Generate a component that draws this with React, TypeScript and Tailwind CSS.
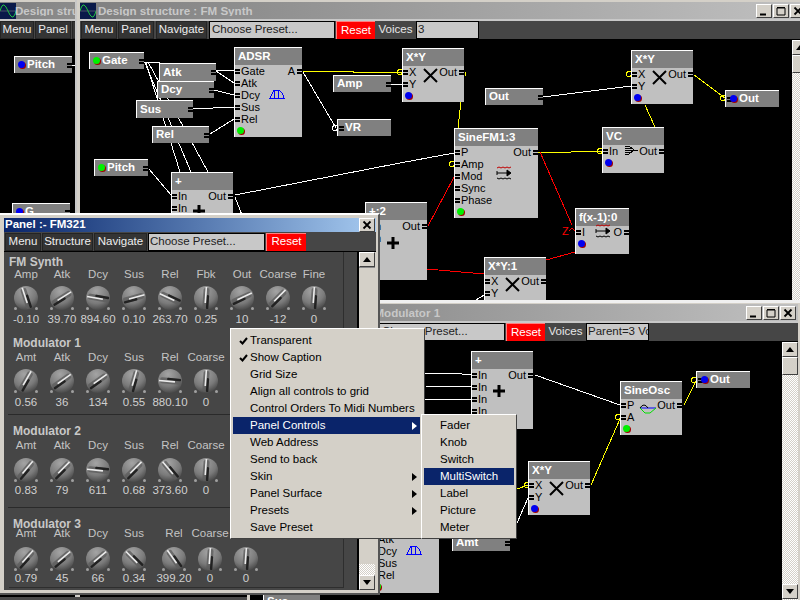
import React from "react";

type N = {
  x: number; y: number; w: number; h: number; t: string;
  kind?: "src" | "dst" | "box";
  dot?: "g" | "b"; ins?: string[]; outs?: string[]; icon?: string; small?: boolean;
};
type W = { p: number[]; c?: string };

const UI = "font-['Liberation_Sans',Arial,sans-serif]";
const BOLD = "font-['Liberation_Sans',Arial,sans-serif] font-bold";

const mainNodes: N[] = [
  { x: 89, y: 52, w: 55, h: 17, t: "Gate", kind: "src", dot: "g" },
  { x: 159, y: 63, w: 57, h: 18, t: "Atk", kind: "src" },
  { x: 157, y: 81, w: 57, h: 17, t: "Dcy", kind: "src" },
  { x: 136, y: 100, w: 57, h: 18, t: "Sus", kind: "src" },
  { x: 152, y: 126, w: 57, h: 17, t: "Rel", kind: "src" },
  { x: 94, y: 159, w: 54, h: 17, t: "Pitch", kind: "src", dot: "g" },
  { x: 333, y: 75, w: 58, h: 17, t: "Amp", kind: "src" },
  { x: 337, y: 119, w: 54, h: 17, t: "VR", kind: "dst" },
  { x: 485, y: 88, w: 58, h: 17, t: "Out", kind: "src" },
  { x: 725, y: 90, w: 54, h: 17, t: "Out", kind: "dst", dot: "b" },
  { x: 234, y: 47, w: 68, h: 90, t: "ADSR", ins: ["Gate", "Atk", "Dcy", "Sus", "Rel"], outs: ["A"], dot: "g", icon: "adsr" },
  { x: 171, y: 172, w: 62, h: 90, t: "+", ins: ["In", "In", "In", "In"], outs: ["Out"], dot: "b", icon: "plus", small: true },
  { x: 402, y: 48, w: 62, h: 54, t: "X*Y", ins: ["X", "Y"], outs: ["Out"], dot: "b", icon: "x" },
  { x: 631, y: 50, w: 62, h: 54, t: "X*Y", ins: ["X", "Y"], outs: ["Out"], dot: "b", icon: "x" },
  { x: 454, y: 128, w: 84, h: 90, t: "SineFM1:3", ins: ["P", "Amp", "Mod", "Sync", "Phase"], outs: ["Out"], dot: "g", icon: "fm" },
  { x: 602, y: 127, w: 62, h: 46, t: "VC", ins: ["In"], outs: ["Out"], dot: "b", icon: "vc" },
  { x: 575, y: 208, w: 54, h: 46, t: "f(x-1):0", ins: ["I"], outs: ["O"], dot: "b", icon: "fm1" },
  { x: 365, y: 202, w: 62, h: 78, t: "+:2", ins: ["In", "In"], outs: ["Out"], icon: "plus2" },
  { x: 484, y: 257, w: 62, h: 54, t: "X*Y:1", ins: ["X", "Y"], outs: ["Out"], dot: "b", icon: "x" },
];

const mainWires: W[] = [
  { p: [146, 63, 180, 172] }, { p: [145, 63, 191, 172] }, { p: [148, 62, 208, 172] }, { p: [144, 62, 160, 62] },
  { p: [216, 70, 234, 71] }, { p: [216, 71, 234, 83] }, { p: [214, 90, 234, 95] }, { p: [193, 109, 234, 107] }, { p: [210, 134, 234, 119] },
  { p: [149, 169, 171, 195] }, { p: [303, 72, 336, 128] }, { p: [390, 84, 402, 84] },
  { p: [235, 195, 400, 163, 454, 153] }, { p: [235, 197, 242, 215] }, { p: [543, 97, 631, 86] }, { p: [476, 300, 484, 295] },
  { p: [303, 71, 353, 71, 353, 72, 402, 72], c: "#ffff00" }, { p: [465, 72, 466, 76], c: "#ffff00" }, { p: [461, 102, 458, 128], c: "#ffff00" },
  { p: [694, 75, 725, 98], c: "#ffff00" }, { p: [645, 105, 655, 127], c: "#ffff00" }, { p: [538, 152, 571, 152, 602, 151], c: "#ffff00" },
  { p: [540, 152, 572, 225], c: "#ff0000" }, { p: [428, 226, 454, 177], c: "#ff0000" }, { p: [427, 269, 484, 274], c: "#ff0000" }, { p: [546, 260, 575, 252], c: "#ff0000" },
];
const mainRings = [[400, 72, "#ffff00"], [629, 74, "#ffff00"], [723, 98, "#ffff00"], [452, 164, "#ffff00"], [600, 151, "#ffff00"], [335, 128, "#ffffff"]] as const;

const modNodes: N[] = [
  { x: 471, y: 350, w: 62, h: 78, t: "+", ins: ["In", "In", "In", "In"], outs: ["Out"], icon: "plus3", small: true },
  { x: 620, y: 380, w: 62, h: 54, t: "SineOsc", ins: ["P", "A"], outs: ["Out"], dot: "g", icon: "sine" },
  { x: 696, y: 370, w: 54, h: 17, t: "Out", kind: "dst", dot: "b" },
  { x: 528, y: 460, w: 62, h: 54, t: "X*Y", ins: ["X", "Y"], outs: ["Out"], dot: "b", icon: "x" },
  { x: 371, y: 502, w: 68, h: 90, t: "ADSR", ins: ["Gate", "Atk", "Dcy", "Sus", "Rel"], dot: "g", icon: "adsr" },
  { x: 452, y: 533, w: 58, h: 17, t: "Amt", kind: "src" },
  { x: 263, y: 592, w: 57, h: 17, t: "Sus", kind: "src" },
];
const modWires: W[] = [
  { p: [425, 372, 444, 372, 462, 373, 472, 374] }, { p: [425, 385, 472, 386] }, { p: [425, 399, 472, 398] },
  { p: [535, 374, 620, 404] }, { p: [517, 522, 528, 497] },
  { p: [517, 488, 528, 484], c: "#ffff00" }, { p: [591, 484, 620, 418], c: "#ffff00" }, { p: [684, 404, 696, 380], c: "#ffff00" },
];
const modRings = [[618, 416, "#ffff00"], [694, 379, "#ffff00"], [527, 484, "#ffff00"]] as const;

function NodeIcon({ name }: { name: string }) {
  const k = "absolute pointer-events-none";
  if (name === "x") return (
    <svg className={k + " left-[20px] top-[19px]"} width="15" height="15" viewBox="0 0 15 15"><path d="M1 1 14 14M14 1 1 14" stroke="#000" strokeWidth="2" /></svg>
  );
  if (name === "plus" || name === "plus2" || name === "plus3") {
    const c = name === "plus" ? " top-[31px]" : name === "plus2" ? " top-[33px]" : " top-[32px]";
    return <svg className={k + " left-[20px]" + c} width="14" height="14" viewBox="0 0 14 14"><path d="M7 1V13M1 7H13" stroke="#000" strokeWidth="3" /></svg>;
  }
  if (name === "adsr") return (
    <svg className={k + " left-[33px] top-[40px]"} width="18" height="11" viewBox="0 0 18 11" shapeRendering="crispEdges"><path d="M1 10H17M2 10 6 2H10Q14 3 16 10M6 2V10M10 2V10" stroke="#0000ff" fill="none" /></svg>
  );
  if (name === "fm" || name === "fm1") return (
    <svg className={k + (name === "fm" ? " left-[41px] top-[37px]" : " left-[19px] top-[15px]")} width="16" height="15" viewBox="0 0 16 15">
      <path d="M1 2 3 1 5 2 7 1 9 2 11 1 13 2 15 1" stroke="#c00000" fill="none" />
      <path d="M1 5V9M1 7H12M11 4 15 7 11 10Z" stroke="#000" fill="#000" />
      <path d="M1 12 3 13 5 12 7 13 9 12 11 13 13 12 15 13" stroke="#000" fill="none" />
    </svg>
  );
  if (name === "vc") return (
    <svg className={k + " left-[21px] top-[17px]"} width="14" height="10" viewBox="0 0 14 10" shapeRendering="crispEdges"><path d="M1 1H5M1 3H7M1 5H14M1 7H7M1 9H5M5 1 10 5 5 9" stroke="#000" fill="none" /></svg>
  );
  if (name === "sine") return (
    <svg className={k + " left-[18px] top-[21px]"} width="18" height="12" viewBox="0 0 18 12"><path d="M1 5H17" stroke="#0000ff" /><path d="M1 5Q5 -1 9 5" stroke="#000" fill="none" /><path d="M1 5 6 10H11L17 5" stroke="#00e000" fill="none" /></svg>
  );
  return null;
}

function Dot({ c }: { c: "g" | "b" }) {
  return (
    <span className="relative block w-[8px] h-[8px]">
      <span className="absolute left-[1px] top-[1px] w-[7px] h-[7px] rounded-full bg-[#a00000]" />
      <span className={"absolute left-0 top-0 w-[7px] h-[7px] rounded-full " + (c === "g" ? "bg-[#00f000]" : "bg-[#0000f0]")} />
    </span>
  );
}
function Port() {
  return <span className="block w-[5px] h-[5px] border-y-2 border-black shrink-0" />;
}

function Node({ n, ox, oy }: { n: N; ox: number; oy: number }) {
  const pos = { left: n.x - ox, top: n.y - oy, width: n.w, height: n.h };
  if (n.kind) {
    return (
      <div className={"absolute bg-[#808080] border-t border-l border-white flex items-center text-white text-[11.5px] leading-none " + BOLD} style={pos}>
        {n.kind === "dst" && <span className="ml-[1px]"><Port /></span>}
        {n.kind === "dst" && n.dot && <span className="-ml-[2px] mr-[1px]"><Dot c={n.dot} /></span>}
        {n.kind === "src" && n.dot && <span className="ml-[3px] mr-[1px]"><Dot c={n.dot} /></span>}
        <span className={n.dot ? "" : n.kind === "dst" ? "ml-[1px]" : "ml-[3px]"}>{n.t}</span>
        {n.kind === "src" && <span className="ml-auto"><Port /></span>}
      </div>
    );
  }
  const ins = n.ins ?? [];
  const outs = n.outs ?? [];
  const rows = Math.max(ins.length, outs.length);
  return (
    <div className="absolute bg-[#c0c0c0] border-t border-l border-white flex flex-col" style={pos}>
      <div className={"h-[17px] shrink-0 bg-[#808080] text-white pl-[3px] flex items-center leading-none text-[11.5px] " + BOLD}>{n.t}</div>
      {Array.from({ length: rows }).map((_, i) => (
        <div key={i} className={"h-[12px] shrink-0 flex items-center text-black text-[11px] leading-none " + UI}>
          {ins[i] ? <Port /> : <span className="w-[5px]" />}
          <span className="ml-[1px]">{ins[i]}</span>
          {outs[i] && <span className="ml-auto mr-[2px]">{outs[i]}</span>}
          {outs[i] && <Port />}
        </div>
      ))}
      {n.dot && <div className="pl-[2px] pt-[2px]"><Dot c={n.dot} /></div>}
      {n.icon && <NodeIcon name={n.icon} />}
    </div>
  );
}

function Wires({ wires, rings, ox, oy }: { wires: W[]; rings: readonly (readonly [number, number, string])[]; ox: number; oy: number }) {
  return (
    <svg className="absolute" style={{ left: -ox, top: -oy }} width="800" height="620" shapeRendering="crispEdges">
      {wires.map((w, i) => <polyline key={i} points={w.p.join(",")} fill="none" stroke={w.c ?? "#ffffff"} strokeWidth="1" />)}
      {rings.map((r, i) => <circle key={i} cx={r[0]} cy={r[1]} r="2.5" fill="none" stroke={r[2]} />)}
    </svg>
  );
}

function WinBtn({ kind }: { kind: "min" | "max" | "x" }) {
  return (
    <span className="w-[16px] h-[14px] bg-[#d4d0c8] border border-t-white border-l-white border-r-[#404040] border-b-[#404040] flex items-center justify-center">
      <svg width="10" height="10" viewBox="0 0 10 10">
        {kind === "min" && <path d="M1 8.5H7" stroke="#000" strokeWidth="2" />}
        {kind === "max" && <path d="M1 2H9V9H1ZM1 1.5H9" stroke="#000" fill="none" strokeWidth="1" />}
        {kind === "x" && <path d="M1.5 1.5 8.5 8.5M8.5 1.5 1.5 8.5" stroke="#000" strokeWidth="1.8" />}
      </svg>
    </span>
  );
}

function Logo() {
  return (
    <svg width="16" height="16" viewBox="0 0 16 16" className="shrink-0">
      <rect width="16" height="16" fill="#0a1a4a" />
      <path d="M0 8H16" stroke="#888" strokeWidth="0.5" />
      <path d="M0 8Q2 1 4 2T8 8T12 14T16 8" stroke="#20c040" fill="none" />
    </svg>
  );
}

function TBtn({ t, w }: { t: string; w: string }) {
  return <span className={"h-[18px] flex items-center justify-center bg-[#343434] border border-[#242424] text-[#eeeeee] text-[11.5px] leading-none shrink-0 " + w}>{t}</span>;
}

function Toolbar({ voices }: { voices: string }) {
  return (
    <div className={"h-[19px] shrink-0 bg-[#464646] flex items-center pl-[1px] text-[11.5px] overflow-hidden border-b border-black " + UI}>
      <TBtn t="Menu" w="w-[36px] mr-[1px]" />
      <TBtn t="Panel" w="w-[36px] mr-[2px]" />
      <TBtn t="Navigate" w="w-[51px] mr-[2px]" />
      <span className="w-[126px] h-[18px] bg-[#c8c8c8] border border-black text-[#222] pl-[2px] flex items-center shrink-0 mr-[1px]">Choose Preset...</span>
      <span className="w-[39px] h-[18px] bg-[#ff0000] border-t border-l border-[#ff8080] text-white flex items-center justify-center shrink-0">Reset</span>
      <span className="w-[41px] text-center text-[#e8e8e8] shrink-0">Voices</span>
      <span className="w-[63px] h-[18px] bg-[#c8c8c8] border border-black text-[#222] pl-[1px] flex items-center shrink-0 overflow-hidden whitespace-nowrap">{voices}</span>
    </div>
  );
}

function ScrollTop({ thumb }: { thumb?: boolean }) {
  return (
    <div className="w-[16px] shrink-0 flex flex-col bg-[repeating-conic-gradient(#d4d0c8_0_25%,#ffffff_0_50%)] bg-[length:2px_2px]">
      <span className="h-[15px] shrink-0 bg-[#d4d0c8] border border-t-white border-l-white border-r-[#404040] border-b-[#404040] flex items-center justify-center">
        <svg width="8" height="5" viewBox="0 0 8 5"><path d="M4 0 8 5H0Z" fill="#000" /></svg>
      </span>
      {thumb && <span className="h-[18px] shrink-0 bg-[#d4d0c8] border border-t-white border-l-white border-r-[#404040] border-b-[#404040]" />}
    </div>
  );
}
function ScrollDown() {
  return (
    <span className="absolute right-0 bottom-[1px] w-[16px] h-[15px] bg-[#d4d0c8] border border-t-white border-l-white border-r-[#404040] border-b-[#404040] flex items-center justify-center">
      <svg width="8" height="5" viewBox="0 0 8 5"><path d="M0 0H8L4 5Z" fill="#000" /></svg>
    </span>
  );
}

function Title({ text, buttons, gap = "ml-[2px]", bg = "from-[#808080] to-[#c0c0c0]" }: { text: string; buttons?: boolean; gap?: string; bg?: string }) {
  return (
    <div className={"h-[17px] shrink-0 bg-gradient-to-r flex items-center text-[#c8c8c8] text-[11.6px] leading-none whitespace-nowrap overflow-hidden " + bg + " " + BOLD}>
      <Logo />
      <span className={"flex-1 overflow-hidden " + gap}>{text}</span>
      {buttons && (
        <span className="flex items-center gap-[1px] pr-[2px] shrink-0">
          <WinBtn kind="min" /><WinBtn kind="max" /><WinBtn kind="x" />
        </span>
      )}
    </div>
  );
}

const sections = [
  {
    title: "FM Synth", wrap: "pt-[3px]", head: "h-[13px] pl-[1px]", labels: "h-[13px]", knobs: "h-[29px] mt-[3px]", vals: "h-[14px]",
    items: [["Amp", "-0.10", -18], ["Atk", "39.70", 58], ["Dcy", "894.60", -80], ["Sus", "0.10", 75], ["Rel", "263.70", -65], ["Fbk", "0.25", 4], ["Out", "10", 65], ["Coarse", "-12", 45], ["Fine", "0", 4]],
  },
  {
    title: "Modulator 1", wrap: "pt-[9px]", head: "h-[14px] pl-[5px]", labels: "h-[14px] mt-[1px]", knobs: "h-[29px] mt-[2px]", vals: "h-[14px]",
    items: [["Amt", "0.56", 30], ["Atk", "36", 55], ["Dcy", "134", 55], ["Sus", "0.55", 16], ["Rel", "880.10", -85], ["Coarse", "0", 4]],
  },
  {
    title: "Modulator 2", wrap: "pt-[9px] mt-[4px] border-t border-[#2a2a2a]", head: "h-[14px] pl-[5px]", labels: "h-[14px] mt-[1px]", knobs: "h-[28px] mt-[3px]", vals: "h-[14px]",
    items: [["Amt", "0.83", 40], ["Atk", "79", 45], ["Dcy", "611", -84], ["Sus", "0.68", 45], ["Rel", "373.60", -40], ["Coarse", "0", 4]],
  },
  {
    title: "Modulator 3", wrap: "pt-[9px] mt-[9px] border-t border-[#2a2a2a]", head: "h-[13px] pl-[5px]", labels: "h-[13px] -mt-[3px]", knobs: "h-[27px] mt-[5px]", vals: "h-[14px]",
    items: [["Amt", "0.79", 42], ["Atk", "45", 50], ["Dcy", "66", 50], ["Sus", "0.34", -45], ["Rel", "399.20", -35], ["Coarse", "0", 4], ["", "0", 4]],
  },
] as const;

function Knob({ a }: { a: number }) {
  return (
    <svg width="30" height="29" viewBox="-15 -14 30 29" className="overflow-visible">
      <defs>
        <radialGradient id="kn" cx="0.42" cy="0.22" r="0.85">
          <stop offset="0" stopColor="#a4a4a4" />
          <stop offset="0.6" stopColor="#7a7a7a" />
          <stop offset="1" stopColor="#3e3e3e" />
        </radialGradient>
      </defs>
      <circle cx="-10.5" cy="10.5" r="1.5" fill="#a0a0a0" />
      <circle cx="10.5" cy="10.5" r="1.5" fill="#a0a0a0" />
      <circle cx="0" cy="0" r="12" fill="url(#kn)" />
      <g transform={`rotate(${a})`}>
        <rect x="-3" y="-10" width="6" height="21" rx="2" fill="#5e5e5e" fillOpacity="0.8" />
        <rect x="0.6" y="-3" width="2.4" height="14" rx="1" fill="#222222" />
        <rect x="-1.2" y="-11" width="1.6" height="16" fill="#ececec" />
      </g>
    </svg>
  );
}

function Panel() {
  return (
    <div className={"absolute left-0 top-[213px] w-[380px] h-[382px] bg-[#d4d0c8] border-t-2 border-t-white border-r-2 border-r-[#555] border-b-2 border-b-[#555] pl-[4px] pr-[2px] pt-[3px] pb-[3px] flex flex-col overflow-hidden " + UI}>
      <div className={"h-[14px] shrink-0 bg-gradient-to-r from-[#0a246a] to-[#a6caf0] flex items-center text-white text-[11.5px] leading-none pl-[1px] " + BOLD}>
        <span className="flex-1">Panel :- FM321</span>
        <span className="mr-[1px]"><WinBtn kind="x" /></span>
      </div>
      <div className="h-[20px] shrink-0 bg-[#464646] flex items-center pl-[1px] text-[11.5px] border-b border-black">
        <TBtn t="Menu" w="w-[36px] mr-[1px]" />
        <TBtn t="Structure" w="w-[51px] mr-[1px]" />
        <TBtn t="Navigate" w="w-[53px] mr-[1px]" />
        <span className="w-[117px] h-[18px] bg-[#c8c8c8] border border-black text-[#222] pl-[1px] flex items-center shrink-0 mr-[1px]">Choose Preset...</span>
        <span className="w-[40px] h-[18px] bg-[#ff0000] border-t border-l border-[#ff8080] text-white flex items-center justify-center shrink-0">Reset</span>
      </div>
      <div className="flex-1 flex min-h-0 relative">
        <div className="relative w-[355px] shrink-0 bg-[#464646] border-r-2 border-black overflow-hidden">
          <span className="absolute left-[5px] top-0 w-[335px] bottom-[2px] border-r border-b border-[#2e2e2e]" />
          {sections.map((s) => (
            <div key={s.title} className={"ml-[4px] mr-[13px] relative " + s.wrap}>
              <div className={"text-[#c8c8c8] text-[12px] leading-none flex items-center " + BOLD + " " + s.head}>{s.title}</div>
              <div className={"flex text-[#c4c4c4] text-[11.5px] leading-none " + s.labels}>
                {s.items.map((it, i) => <span key={i} className={"text-center whitespace-nowrap flex items-center justify-center shrink-0 " + (s.title === "Modulator 3" && i >= 4 ? "w-[36px] translate-x-[4px]" : "w-[36px]")}>{it[0]}</span>)}
              </div>
              <div className={"flex " + s.knobs}>
                {s.items.map((it, i) => <span key={i} className={"flex justify-center shrink-0 " + (s.title === "Modulator 3" && i >= 4 ? "w-[36px] translate-x-[4px]" : "w-[36px]")}><Knob a={it[2]} /></span>)}
              </div>
              <div className={"flex text-[#d0d0d0] text-[11.5px] leading-none " + s.vals}>
                {s.items.map((it, i) => <span key={i} className={"flex items-center justify-center shrink-0 " + (s.title === "Modulator 3" && i >= 4 ? "w-[36px] translate-x-[4px]" : "w-[36px]")}>{it[1]}</span>)}
              </div>
            </div>
          ))}
        </div>
        <div className="relative w-[17px] shrink-0 flex">
          <ScrollTop thumb />
          <span className="absolute left-0 top-[15px] w-[16px] h-[297px] bg-[#d4d0c8] border-t border-t-[#888]" />
          <span className="absolute right-[1px] bottom-0 w-[16px] h-[15px] bg-[#d4d0c8] border border-t-white border-l-white border-r-[#404040] border-b-[#404040] flex items-center justify-center">
            <svg width="8" height="5" viewBox="0 0 8 5"><path d="M0 0H8L4 5Z" fill="#000" /></svg>
          </span>
        </div>
      </div>
    </div>
  );
}

function Arrow() {
  return <svg className="ml-auto mr-[2px]" width="5" height="8" viewBox="0 0 5 8"><path d="M0 0 5 4 0 8Z" fill="currentColor" /></svg>;
}
function Check() {
  return <svg className="absolute left-[6px] top-[5px]" width="9" height="8" viewBox="0 0 9 8"><path d="M1 4 3.5 6.5 8 1" stroke="#000" strokeWidth="2" fill="none" /></svg>;
}

const menuItems: [string, boolean, boolean][] = [
  ["Transparent", true, false], ["Show Caption", true, false], ["Grid Size", false, false], ["Align all controls to grid", false, false],
  ["Control Orders To Midi Numbers", false, false], ["Panel Controls", false, true], ["Web Address", false, false], ["Send to back", false, false],
  ["Skin", false, true], ["Panel Surface", false, true], ["Presets", false, true], ["Save Preset", false, false],
];
const subItems = ["Fader", "Knob", "Switch", "MultiSwitch", "Label", "Picture", "Meter"];

function Menus() {
  return (
    <>
      <div className={"absolute left-[230px] top-[328px] w-[195px] h-[211px] bg-[#d4d0c8] border border-t-white border-l-white border-r-[#404040] border-b-[#404040] pt-[3px] pl-[2px] pr-[4px] text-[11.5px] leading-none " + UI}>
        {menuItems.map(([t, c, sub]) => (
          <div key={t} className={"relative h-[17px] flex items-center pl-[17px] pr-[1px] " + (t === "Panel Controls" ? "bg-[#0a246a] text-white" : "text-black")}>
            {c && <Check />}
            <span>{t}</span>
            {sub && <Arrow />}
          </div>
        ))}
      </div>
      <div className={"absolute left-[421px] top-[414px] w-[96px] h-[125px] bg-[#d4d0c8] border border-t-white border-l-white border-r-[#404040] border-b-[#404040] p-[2px] text-[11.5px] leading-none " + UI}>
        {subItems.map((t) => (
          <div key={t} className={"h-[17px] flex items-center pl-[16px] " + (t === "MultiSwitch" ? "bg-[#0a246a] text-white" : "text-black")}>{t}</div>
        ))}
      </div>
    </>
  );
}

export default function App() {
  return (
    <div className={"relative w-[800px] h-[600px] overflow-hidden bg-[#4a4a4a] " + UI}>
      {/* back window */}
      <div className="absolute left-0 top-0 w-[77px] h-[597px] bg-[#d4d0c8] border-r-2 border-r-[#c8c8c8] pt-[2px] flex flex-col overflow-hidden">
        <Title text="Design structure : Pitch" gap="-ml-[1px]" bg="from-[#808080] to-[#8c8c8c]" />
        <div className="h-[2px] shrink-0 bg-[#c8c8c8]" />
        <div className={"h-[19px] shrink-0 bg-[#464646] flex items-center text-[11.5px] overflow-hidden border-b border-black " + UI}>
          <TBtn t="Menu" w="w-[34px] mr-[1px]" />
          <TBtn t="Panel" w="w-[36px] mr-[1px]" />
          <TBtn t="" w="w-[20px]" />
        </div>
        <div className="relative flex-1 bg-black overflow-hidden">
          <Wires wires={[{ p: [72, 65, 76, 65] }]} rings={[]} ox={0} oy={40} />
          <Node n={{ x: 14, y: 56, w: 58, h: 17, t: "Pitch", kind: "src", dot: "b" }} ox={0} oy={40} />
          <Node n={{ x: 12, y: 203, w: 58, h: 17, t: "G", kind: "src", dot: "b" }} ox={0} oy={40} />
        </div>
      </div>

      {/* main structure window */}
      <div className="absolute left-[77px] top-0 w-[731px] h-[597px] bg-[#d4d0c8] border-l-[3px] border-l-[#d4d0c8] pt-[2px] flex flex-col">
        <Title text="Design structure : FM Synth" buttons />
        <div className="h-[2px] shrink-0 bg-[#c8c8c8]" />
        <Toolbar voices="3" />
        <div className="flex-1 flex min-h-0">
          <div className="relative flex-1 bg-black overflow-hidden">
            <Wires wires={mainWires} rings={mainRings} ox={80} oy={40} />
            {mainNodes.map((n, i) => <Node key={i} n={n} ox={80} oy={40} />)}
            <span className="absolute left-[482px] top-[186px] text-[#ff0000] text-[11px] leading-none">Z</span>
            <svg className="absolute left-[489px] top-[188px]" width="6" height="4" viewBox="0 0 6 4"><path d="M0 3 3 0 6 3" stroke="#ff0000" fill="none" /></svg>
          </div>
          <ScrollTop thumb />
        </div>
      </div>

      {/* modulator structure window */}
      <div className="absolute left-[247px] top-[300px] w-[553px] h-[300px] bg-[#d4d0c8] border-t-[3px] border-t-[#f0f0f0] pl-[3px] pr-[2px] pt-[1px] flex flex-col">
        <Title text="Design structure : Modulator 1" buttons gap="ml-[6px]" />
        <div className="h-[2px] shrink-0 bg-[#c8c8c8]" />
        <Toolbar voices="Parent=3 Voices" />
        <div className="flex-1 flex min-h-0 relative">
          <div className="relative flex-1 bg-black overflow-hidden">
            <Wires wires={modWires} rings={modRings} ox={250} oy={341} />
            {modNodes.map((n, i) => <Node key={i} n={n} ox={250} oy={341} />)}
          </div>
          <ScrollTop thumb />
          <ScrollDown />
        </div>
      </div>

      <Panel />
      <Menus />
    </div>
  );
}
